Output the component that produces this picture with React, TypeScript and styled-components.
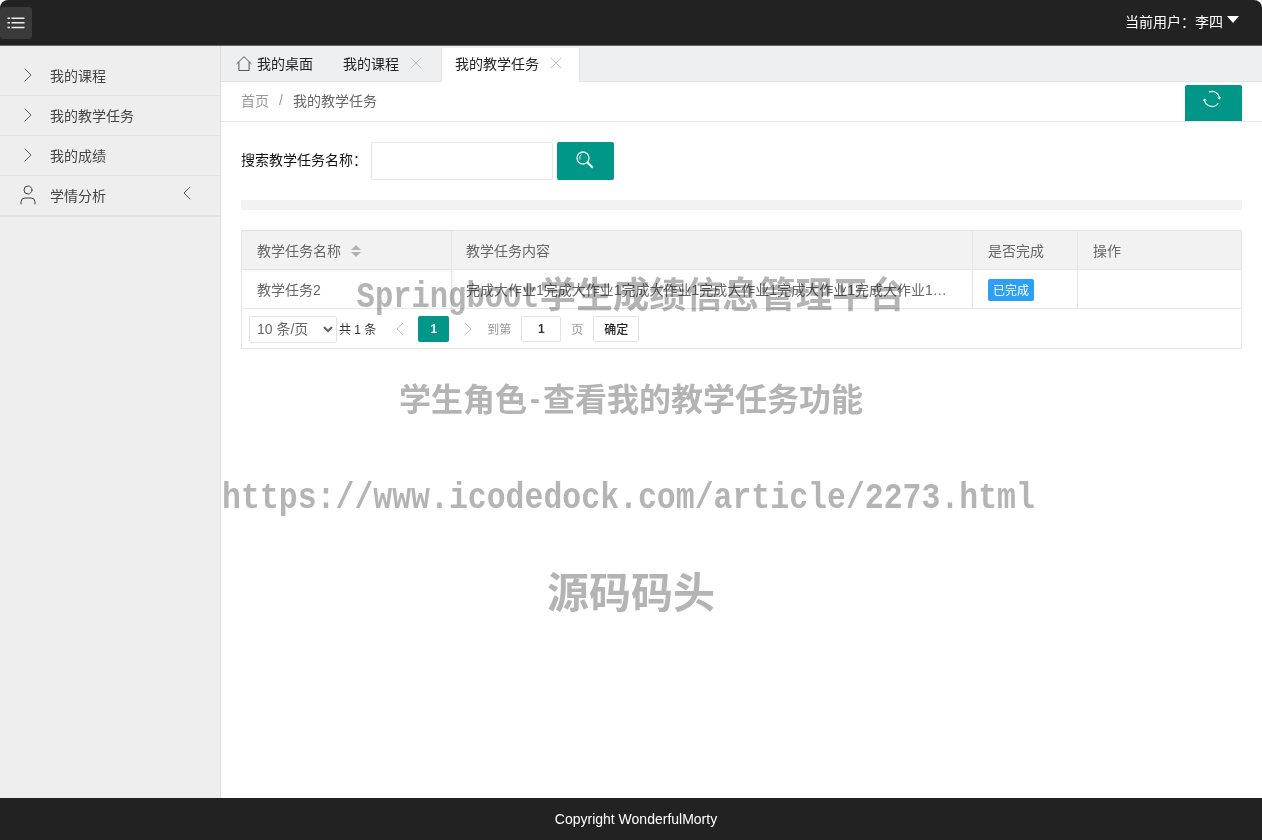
import styled, { createGlobalStyle } from 'styled-components';
import { ChevronLeft, ChevronRight, User, X } from 'lucide-react';

const TEAL = '#009688';
const FONT = '"Liberation Sans", "Noto Sans CJK SC", sans-serif';

const GlobalStyle = createGlobalStyle`
  html, body {
    margin: 0;
    padding: 0;
    height: 100%;
    background: #fff;
  }
  #root {
    height: 100%;
  }
  * {
    box-sizing: border-box;
  }
`;

const menuItems = ['我的课程', '我的教学任务', '我的成绩'];

export default function App() {
  return (
    <Page>
      <GlobalStyle />
      <Header>
        <MenuButton aria-label="menu">
          <svg width="18" height="12" viewBox="0 0 18 12" fill="none" stroke="#eee" strokeWidth="1.5">
            <path d="M0.5 1.2h2.5M0.5 5.8h2.5M0.5 10.4h2.5M4.5 1.2H17.5M4.5 5.8H17.5M4.5 10.4H17.5" />
          </svg>
        </MenuButton>
        <UserInfo>
          当前用户：李四
          <Caret />
        </UserInfo>
      </Header>
      <Body>
        <Sidebar>
          {menuItems.map((item) => (
            <SideItem key={item}>
              <SideIcon>
                <ChevronRight size={24} strokeWidth={0.9} />
              </SideIcon>
              {item}
            </SideItem>
          ))}
          <SideItem $last>
            <SideIcon>
              <User size={24} strokeWidth={1} />
            </SideIcon>
            学情分析
            <Collapse>
              <ChevronLeft size={24} strokeWidth={0.9} />
            </Collapse>
          </SideItem>
        </Sidebar>
        <Main>
          <TabBar>
            <Tab $home>
              <svg width="16" height="15" viewBox="0 0 16 15" fill="none" stroke="#555" strokeWidth="1">
                <path d="M0.5 8L8 0.7L15.5 8M2.9 6v8.5h10.2V6" />
              </svg>
              我的桌面
            </Tab>
            <Tab>
              我的课程
              <X size={20} strokeWidth={1} color="#bbb" />
            </Tab>
            <Tab $active>
              我的教学任务
              <X size={20} strokeWidth={1} color="#bbb" />
            </Tab>
          </TabBar>
          <Crumbs>
            <CrumbFirst>首页</CrumbFirst>
            <CrumbSep>/</CrumbSep>
            <CrumbLast>我的教学任务</CrumbLast>
            <RefreshButton aria-label="refresh">
              <svg width="18" height="18" viewBox="0 0 18 18" fill="none" stroke="#e8f7f5" strokeWidth="1.2">
                <path d="M6 2.1A7.5 7.5 0 0 1 16.5 9" />
                <path d="M15.3 13A7.5 7.5 0 0 1 1.5 9" />
                <path d="M14.8 7.2l1.7 2 1.3-2.2M0.2 10.8l1.3-2 1.7 1.8" strokeWidth="1" />
              </svg>
            </RefreshButton>
          </Crumbs>
          <Content>
            <SearchRow>
              <SearchLabel>搜索教学任务名称：</SearchLabel>
              <SearchInput />
              <SearchButton aria-label="search">
                <svg width="18" height="18" viewBox="0 0 18 18" fill="none" stroke="#e8f7f5">
                  <circle cx="7" cy="7" r="6" strokeWidth="1.3" />
                  <path d="M4 8.5A4 4 0 0 1 5.5 3.6" strokeWidth="1" />
                  <path d="M11.8 11.8l4.4 4.4" strokeWidth="2.2" strokeLinecap="round" />
                </svg>
              </SearchButton>
            </SearchRow>
            <Divider />
            <TableBox>
              <Table>
                <colgroup>
                  <col width="210" />
                  <col width="521" />
                  <col width="105" />
                  <col />
                </colgroup>
                <thead>
                  <tr>
                    <HeadCell $fixed>
                      <SortLabel>
                        教学任务名称
                        <SortIcon>
                          <SortUp />
                          <SortDown />
                        </SortIcon>
                      </SortLabel>
                    </HeadCell>
                    <HeadCell $tight>教学任务内容</HeadCell>
                    <HeadCell>是否完成</HeadCell>
                    <HeadCell>操作</HeadCell>
                  </tr>
                </thead>
                <tbody>
                  <tr>
                    <Cell $fixed>教学任务2</Cell>
                    <Cell $tight>完成大作业1完成大作业1完成大作业1完成大作业1完成大作业1完成大作业1完成大作业1完成大作业1</Cell>
                    <Cell>
                      <Badge>已完成</Badge>
                    </Cell>
                    <Cell />
                  </tr>
                </tbody>
              </Table>
              <Pager>
                <PageSize defaultValue="10">
                  <option value="10">10 条/页</option>
                  <option value="20">20 条/页</option>
                </PageSize>
                <Count>共 1 条</Count>
                <PageArrow $width={42} $shift={5}>
                  <ChevronLeft size={24} strokeWidth={1} />
                </PageArrow>
                <CurrentPage>1</CurrentPage>
                <PageArrow $width={38} $shift={0}>
                  <ChevronRight size={24} strokeWidth={1} />
                </PageArrow>
                <PagerText>到第</PagerText>
                <PageInput defaultValue="1" />
                <PagerText>页</PagerText>
                <ConfirmButton>确定</ConfirmButton>
              </Pager>
            </TableBox>
          </Content>
        </Main>
      </Body>
      <Footer>Copyright WonderfulMorty</Footer>
      <Watermark>
        <MarkLine $size={36.6} $top={271}>
          <MarkLatin $size={30.5}>Springboot</MarkLatin>学生成绩信息管理平台
        </MarkLine>
        <MarkLine $size={32} $top={53}>
          学生角色<MarkLatin $size={26.6}>-</MarkLatin>查看我的教学任务功能
        </MarkLine>
        <MarkLine $size={38} $top={45} $right={5}>
          <MarkLatin $size={31.5}>https://www.icodedock.com/article/2273.html</MarkLatin>
        </MarkLine>
        <MarkLine $size={42} $top={45}>
          源码码头
        </MarkLine>
      </Watermark>
    </Page>
  );
}

const Page = styled.div`
  position: relative;
  display: flex;
  flex-direction: column;
  height: 840px;
  overflow: hidden;
  font-family: ${FONT};
  font-size: 14px;
  color: #333;
  background: #fff;
`;

const Header = styled.header`
  display: flex;
  align-items: center;
  justify-content: space-between;
  flex: none;
  height: 46px;
  padding: 0 22px 0 0;
  background: #222;
  border-bottom: 1px solid #666;
  border-radius: 8px 8px 0 0;
`;

const MenuButton = styled.button`
  display: flex;
  align-items: center;
  justify-content: center;
  width: 32px;
  height: 32px;
  padding: 0;
  margin: 0 0 -1px;
  border: 0;
  border-radius: 3px;
  background: #3a3a3a;
`;

const UserInfo = styled.div`
  display: flex;
  align-items: center;
  padding-bottom: 3px;
  margin-right: 1px;
  color: #fff;
  font-size: 14px;
`;

const Caret = styled.span`
  width: 0;
  height: 0;
  margin: -4px 0 0 4px;
  border-left: 6.5px solid transparent;
  border-right: 6.5px solid transparent;
  border-top: 7px solid #fff;
`;

const Body = styled.div`
  display: flex;
  flex: 1;
  min-height: 0;
`;

const Sidebar = styled.aside`
  flex: none;
  width: 221px;
  padding-top: 10px;
  background: #eee;
  border-right: 1px solid #ddd;
`;

const SideItem = styled.div<{ $last?: boolean }>`
  position: relative;
  display: flex;
  align-items: center;
  height: ${({ $last }) => ($last ? '41px' : '40px')};
  padding: 0 0 2px 50px;
  color: #444;
  font-size: 14px;
  border-bottom: ${({ $last }) => ($last ? '2px solid #e2e2e2' : '1px solid #e2e2e2')};
`;

const SideIcon = styled.span`
  position: absolute;
  left: 16px;
  top: 7px;
  display: flex;
  width: 24px;
  justify-content: center;
  color: #444;
`;

const Collapse = styled.span`
  position: absolute;
  left: 175px;
  top: 5px;
  display: flex;
  color: #444;
`;

const Main = styled.main`
  display: flex;
  flex-direction: column;
  flex: 1;
  min-width: 0;
`;

const TabBar = styled.div`
  display: flex;
  align-items: flex-end;
  flex: none;
  height: 36px;
  background: #eeeff1;
  border-bottom: 1px solid #e4e4e4;
`;

const Tab = styled.div<{ $active?: boolean; $home?: boolean }>`
  display: flex;
  align-items: center;
  gap: ${({ $home }) => ($home ? '5px' : '7px')};
  height: 34px;
  margin-bottom: ${({ $active }) => ($active ? '-1px' : '0')};
  padding: ${({ $home, $active }) => ($home ? '0 15px 2px' : $active ? '0 13px 4px 13px' : '0 14px 2px')};
  color: #222;
  font-size: 14px;
  background: ${({ $active }) => ($active ? '#fff' : 'transparent')};
  border-left: ${({ $home, $active }) => ($home ? '0' : $active ? '1px solid #e4e4e4' : '1px solid transparent')};
  border-right: ${({ $home, $active }) => ($home ? '0' : $active ? '1px solid #e4e4e4' : '1px solid transparent')};
`;

const Crumbs = styled.div`
  display: flex;
  align-items: center;
  flex: none;
  height: 40px;
  padding: 0 20px;
  border-bottom: 1px solid #e6e6e6;
  background: #fff;
`;

const CrumbFirst = styled.span`
  padding-bottom: 3px;
  color: #999;
`;

const CrumbSep = styled.span`
  margin: 0 10px;
  padding-bottom: 3px;
  color: #999;
`;

const CrumbLast = styled.span`
  padding-bottom: 3px;
  color: #666;
`;

const RefreshButton = styled.button`
  display: flex;
  align-items: flex-start;
  justify-content: center;
  width: 57px;
  height: 36px;
  margin: 3px 0 0 auto;
  padding: 5px 3px 0 0;
  border: 0;
  border-radius: 2px 2px 0 0;
  background: ${TEAL};
`;

const Content = styled.div`
  flex: 1;
  padding: 20px 20px 0;
`;

const SearchRow = styled.div`
  display: flex;
  align-items: center;
`;

const SearchLabel = styled.label`
  width: 130px;
  padding-bottom: 4px;
  color: #111;
  font-size: 14px;
`;

const SearchInput = styled.input`
  width: 182px;
  height: 38px;
  padding: 0 10px;
  border: 1px solid #e6e6e6;
  border-radius: 2px;
  background: #fff;
`;

const SearchButton = styled.button`
  display: flex;
  align-items: center;
  justify-content: center;
  width: 57px;
  height: 38px;
  margin-left: 4px;
  padding: 0 2px 3px 0;
  border: 0;
  border-radius: 2px;
  background: ${TEAL};
`;

const Divider = styled.div`
  height: 10px;
  margin: 20px 0;
  background: #f2f2f2;
`;

const TableBox = styled.div`
  border: 1px solid #e6e6e6;
`;

const Table = styled.table`
  width: 100%;
  table-layout: fixed;
  border-collapse: separate;
  border-spacing: 0;
`;

const HeadCell = styled.th<{ $fixed?: boolean; $tight?: boolean }>`
  height: 39px;
  padding: 0 15px 1px ${({ $tight }) => ($tight ? '14px' : '15px')};
  color: #666;
  font-size: 14px;
  font-weight: 400;
  text-align: left;
  background: #f2f2f2;
  border-bottom: 1px solid #e6e6e6;
  border-right: 1px solid #e6e6e6;
  box-shadow: ${({ $fixed }) => ($fixed ? '2px 0 3px rgba(0, 0, 0, 0.08)' : 'none')};

  &:last-child {
    border-right: 0;
  }
`;

const Cell = styled.td<{ $fixed?: boolean; $tight?: boolean }>`
  height: 39px;
  padding: 0 15px 1px ${({ $tight }) => ($tight ? '14px' : '15px')};
  color: #666;
  font-size: 14px;
  overflow: hidden;
  white-space: nowrap;
  text-overflow: ellipsis;
  border-bottom: 1px solid #e6e6e6;
  border-right: 1px solid #e6e6e6;
  box-shadow: ${({ $fixed }) => ($fixed ? '2px 0 3px rgba(0, 0, 0, 0.04)' : 'none')};

  &:last-child {
    border-right: 0;
  }
`;

const SortLabel = styled.span`
  display: flex;
  align-items: center;
`;

const SortIcon = styled.span`
  display: flex;
  flex-direction: column;
  gap: 2px;
  margin: 3px 0 0 10px;
`;

const SortUp = styled.i`
  width: 0;
  height: 0;
  border-left: 5px solid transparent;
  border-right: 5px solid transparent;
  border-bottom: 5px solid #b2b2b2;
`;

const SortDown = styled.i`
  width: 0;
  height: 0;
  border-left: 5px solid transparent;
  border-right: 5px solid transparent;
  border-top: 5px solid #b2b2b2;
`;

const Badge = styled.span`
  display: inline-flex;
  align-items: center;
  height: 22px;
  margin-top: 2px;
  padding: 0 5px;
  color: #fff;
  font-size: 12px;
  background: #2d9ff5;
  border-radius: 2px;
`;

const Pager = styled.div`
  display: flex;
  align-items: center;
  height: 39px;
  padding: 1px 7px 0;
`;

const PageSize = styled.select`
  width: 88px;
  height: 27px;
  padding: 0 3px;
  color: #666;
  font-family: ${FONT};
  font-size: 14px;
  background: #fff;
  border: 1px solid #e2e2e2;
  border-radius: 2px;
`;

const Count = styled.span`
  margin-left: 2px;
  padding-bottom: 2px;
  color: #333;
  font-size: 12px;
`;

const PageArrow = styled.span<{ $width: number; $shift: number }>`
  display: flex;
  align-items: center;
  justify-content: center;
  width: ${({ $width }) => $width}px;
  padding-left: ${({ $shift }) => $shift}px;
  color: #c2c2c2;
`;

const CurrentPage = styled.span`
  display: flex;
  align-items: center;
  justify-content: center;
  width: 31px;
  height: 26px;
  color: #fff;
  font-size: 12px;
  font-weight: 700;
  background: ${TEAL};
  border-radius: 2px;
`;

const PagerText = styled.span`
  padding-bottom: 2px;
  color: #999;
  font-size: 12px;
`;

const PageInput = styled.input`
  width: 40px;
  height: 26px;
  margin: 0 10px;
  padding: 0;
  color: #333;
  font-family: ${FONT};
  font-size: 12px;
  font-weight: 700;
  text-align: center;
  border: 1px solid #e2e2e2;
  border-radius: 2px;
`;

const ConfirmButton = styled.button`
  width: 46px;
  height: 26px;
  margin-left: 10px;
  padding: 0 0 2px;
  color: #222;
  font-family: ${FONT};
  font-size: 12px;
  font-weight: 500;
  background: #fff;
  border: 1px solid #e2e2e2;
  border-radius: 2px;
`;

const Footer = styled.footer`
  display: flex;
  align-items: center;
  justify-content: center;
  flex: none;
  height: 42px;
  padding-left: 10px;
  color: #fff;
  font-size: 14px;
  background: #222;
`;

// Baked-in watermark that lies over the whole page
const Watermark = styled.div`
  position: absolute;
  inset: 0;
  display: flex;
  flex-direction: column;
  align-items: center;
  pointer-events: none;
  mix-blend-mode: multiply;
  color: #b4b4b4;
  font-weight: 700;
`;

const MarkLine = styled.div<{ $size: number; $top: number; $right?: number }>`
  margin-top: ${({ $top }) => $top}px;
  padding-right: ${({ $right }) => $right ?? 0}px;
  font-family: "Noto Sans CJK SC", sans-serif;
  font-size: ${({ $size }) => $size}px;
  line-height: 44px;
  white-space: nowrap;
`;

const MarkLatin = styled.span<{ $size: number }>`
  display: inline-block;
  font-family: "Liberation Mono", monospace;
  font-size: ${({ $size }) => $size}px;
  transform: translateY(-3px) scaleY(1.2);
`;
